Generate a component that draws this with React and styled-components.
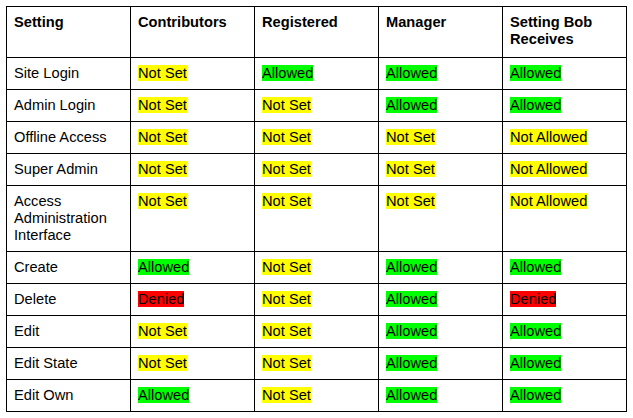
import styled, { createGlobalStyle } from "styled-components";

const GlobalStyle = createGlobalStyle`
    html, body {
        margin: 0;
        padding: 0;
        background: #ffffff;
    }
    body {
        font-family: "Liberation Sans", Arial, sans-serif;
        color: #000000;
    }
`;

const Page = styled.div`
    padding: 6px 0 0 6px;
`;

const Table = styled.table`
    border-collapse: collapse;
    table-layout: fixed;
    width: 621px;
    font-size: 14.67px;
    line-height: 17px;
`;

const Col = styled.col`
    width: 124px;
`;

const Cell = styled.td`
    border: 1px solid #000000;
    padding: 7px 7px 7px 7px;
    vertical-align: top;
    text-align: left;
`;

const HeadCell = styled(Cell).attrs({ as: "th" })`
    font-weight: bold;
    padding-bottom: 9px;
`;

const colours = {
    "Not Set": "#ffff00",
    "Allowed": "#00ff00",
    "Not Allowed": "#ffff00",
    "Denied": "#ff0000",
};

const Mark = styled.span`
    background: ${(p) => p.$bg};
`;

const headers = ["Setting", "Contributors", "Registered", "Manager", "Setting Bob Receives"];

const rows = [
    ["Site Login", "Not Set", "Allowed", "Allowed", "Allowed"],
    ["Admin Login", "Not Set", "Not Set", "Allowed", "Allowed"],
    ["Offline Access", "Not Set", "Not Set", "Not Set", "Not Allowed"],
    ["Super Admin", "Not Set", "Not Set", "Not Set", "Not Allowed"],
    ["Access Administration Interface", "Not Set", "Not Set", "Not Set", "Not Allowed"],
    ["Create", "Allowed", "Not Set", "Allowed", "Allowed"],
    ["Delete", "Denied", "Not Set", "Allowed", "Denied"],
    ["Edit", "Not Set", "Not Set", "Allowed", "Allowed"],
    ["Edit State", "Not Set", "Not Set", "Allowed", "Allowed"],
    ["Edit Own", "Allowed", "Not Set", "Allowed", "Allowed"],
];

const App = () => {
    return (
        <Page>
            <GlobalStyle />
            <Table>
                <colgroup>
                    {headers.map((h) => (
                        <Col key={h} />
                    ))}
                </colgroup>
                <thead>
                    <tr>
                        {headers.map((h) => (
                            <HeadCell key={h}>{h}</HeadCell>
                        ))}
                    </tr>
                </thead>
                <tbody>
                    {rows.map((r) => (
                        <tr key={r[0]}>
                            <Cell>{r[0]}</Cell>
                            {r.slice(1).map((v, i) => (
                                <Cell key={i}>
                                    <Mark $bg={colours[v]}>{v}</Mark>
                                </Cell>
                            ))}
                        </tr>
                    ))}
                </tbody>
            </Table>
        </Page>
    );
};

export default App;
